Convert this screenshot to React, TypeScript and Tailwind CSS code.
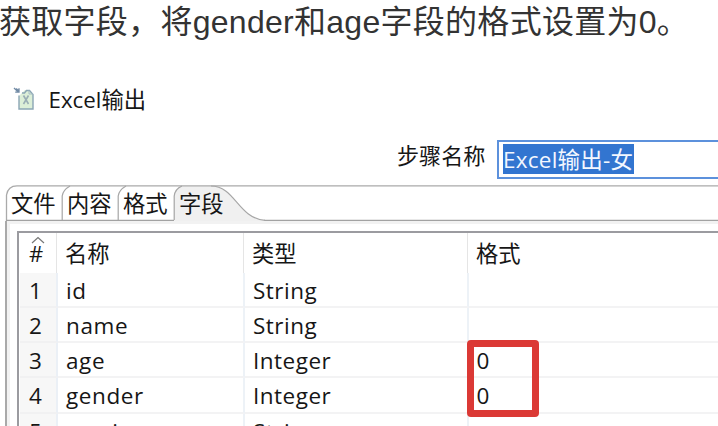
import React from "react";

const ui = "font-['Open_Sans','Noto_Sans_CJK_SC',sans-serif]";

const rows = [
  { n: 1, name: "id", type: "String", format: "" },
  { n: 2, name: "name", type: "String", format: "" },
  { n: 3, name: "age", type: "Integer", format: "0" },
  { n: 4, name: "gender", type: "Integer", format: "0" },
  { n: 5, name: "service", type: "String", format: "" },
];

const tabs = ["文件", "内容", "格式", "字段"];

function ExcelIcon() {
  return (
    <svg className="mt-[11px] h-6 w-6 shrink-0" viewBox="0 0 24 24" fill="none">
      <path d="M6 9V22H20V7L16 3H12L9 6" fill="#dcefd8" />
      <path d="M6 8.5V22H20V7.5L16.5 3.5H13.5L11.5 6H9" stroke="#8ba6b5" strokeWidth="1.4" />
      <path d="M16 3.5V7H20" stroke="#a7bdc5" />
      <path d="M10.5 8.5L15.5 17M15.5 8.5L10.5 17" stroke="#9aaeb5" strokeWidth="1.6" />
      <path d="M1 1L5 4.8M6 1.2V5.2H2.2M3.2 1.5L5.8 4" stroke="#718aa5" strokeWidth="1.3" />
    </svg>
  );
}

function Tabs() {
  return (
    <div className="relative h-9">
      <svg className="absolute inset-0 h-9 w-[718px]" viewBox="0 0 718 36" fill="none">
        <path d="M174 36V10Q175 1 184 1H211C233 1 238 33 265 35.5V36Z" fill="#f0f0f0" />
        <path d="M6.5 36V10Q8 .8 17 .8H718" stroke="#aaa" strokeWidth="1.3" />
        <path d="M6 35.4H174M264 35.4H718" stroke="#a2a2a2" strokeWidth="1.3" />
        <path d="M62.2 35V11Q63 5 70 1M118.2 35V11Q119 5 126 1M174.2 35V11Q175 4 182 1" stroke="#a6a6a6" strokeWidth="1.2" />
        <path d="M211 1C235 1 238 33 265 35.4" stroke="#a6a6a6" strokeWidth="1.2" />
      </svg>
      <div className="relative flex pl-[11px]">
        {tabs.map((tab) => (
          <div key={tab} className="w-14 text-[22.3px] leading-[38px]">{tab}</div>
        ))}
      </div>
    </div>
  );
}

export default function App() {
  return (
    <main className={`h-[426px] w-[718px] overflow-hidden bg-white text-[#161616] ${ui}`}>
      <h1 className="-ml-px h-[76px] whitespace-nowrap font-['Liberation_Sans','Noto_Sans_CJK_SC',sans-serif] text-[32px] font-normal leading-[44px] tracking-[0.28px] text-[#333]">
        获取字段，将gender和age字段的格式设置为0。
      </h1>
      <div className="flex h-16 pl-[13px]">
        <ExcelIcon />
        <span className="ml-[11.5px] text-[22.3px] leading-[48px]">Excel输出</span>
      </div>
      <div className="flex h-[45px] pl-[397px]">
        <label className="w-[100px] text-[22.1px] leading-[31px]">步骤名称</label>
        <div className="h-[39px] grow border-2 border-r-0 border-[#5c91dc] pl-1 pt-[2px]">
          <span className="block h-[30px] w-[131px] whitespace-nowrap bg-[#3275d0] text-[22.5px] leading-[32px] tracking-[0.25px] text-[#f3f7ff]">Excel输出-女</span>
        </div>
      </div>
      <Tabs />
      <section className="ml-[5px] h-[205px] border-l-2 border-[#a9a9a9] pl-[10px] pt-[10px] shadow-[inset_3px_3px_0_#f2f2f2]">
        <div className="h-[195px] overflow-hidden border-l-2 border-t-2 border-[#9b9ba0] bg-white">
          <div className="flex h-[39.5px] text-[22.3px] leading-[42px]">
            <div className="relative w-[38px] border-r border-[#e5e5e5] pl-[10px] text-[22px] leading-[40px]">
              #
              <svg className="absolute left-[11px] top-[3px] h-2 w-4" viewBox="0 0 16 8" fill="none">
                <path d="M2 7L8 1.5L14 7" stroke="#777" strokeWidth="1.2" />
              </svg>
            </div>
            <div className="w-[187px] border-r border-[#e5e5e5] pl-[8px]">名称</div>
            <div className="w-[224px] border-r border-[#e5e5e5] pl-[8px]">类型</div>
            <div className="pl-[8px]">格式</div>
          </div>
          <div className="relative">
            {rows.map((row) => (
              <div key={row.n} className="flex h-[35.3px] text-[22.5px] leading-[36.8px]">
                <div className="ml-px w-[38px] border-b-2 border-r-2 border-b-[#f1f1f2] border-r-[#ebf0f6] bg-[#f7f7f7] pl-[9px]">{row.n}</div>
                <div className="w-[187px] border-b-2 border-r-2 border-b-[#f3f3f4] border-r-[#edf2f7] pl-[8px] tracking-[0.6px]">{row.name}</div>
                <div className="w-[224px] border-b-2 border-r-2 border-b-[#f3f3f4] border-r-[#edf2f7] pl-[8px] tracking-[0.5px]">{row.type}</div>
                <div className="grow border-b-2 border-[#f3f3f4] pl-[7.5px]">{row.format}</div>
              </div>
            ))}
            <div className="absolute left-[448px] top-[67px] h-[77px] w-[72px] rounded-[4px] border-[7px] border-[#db3935]" />
          </div>
        </div>
      </section>
    </main>
  );
}
